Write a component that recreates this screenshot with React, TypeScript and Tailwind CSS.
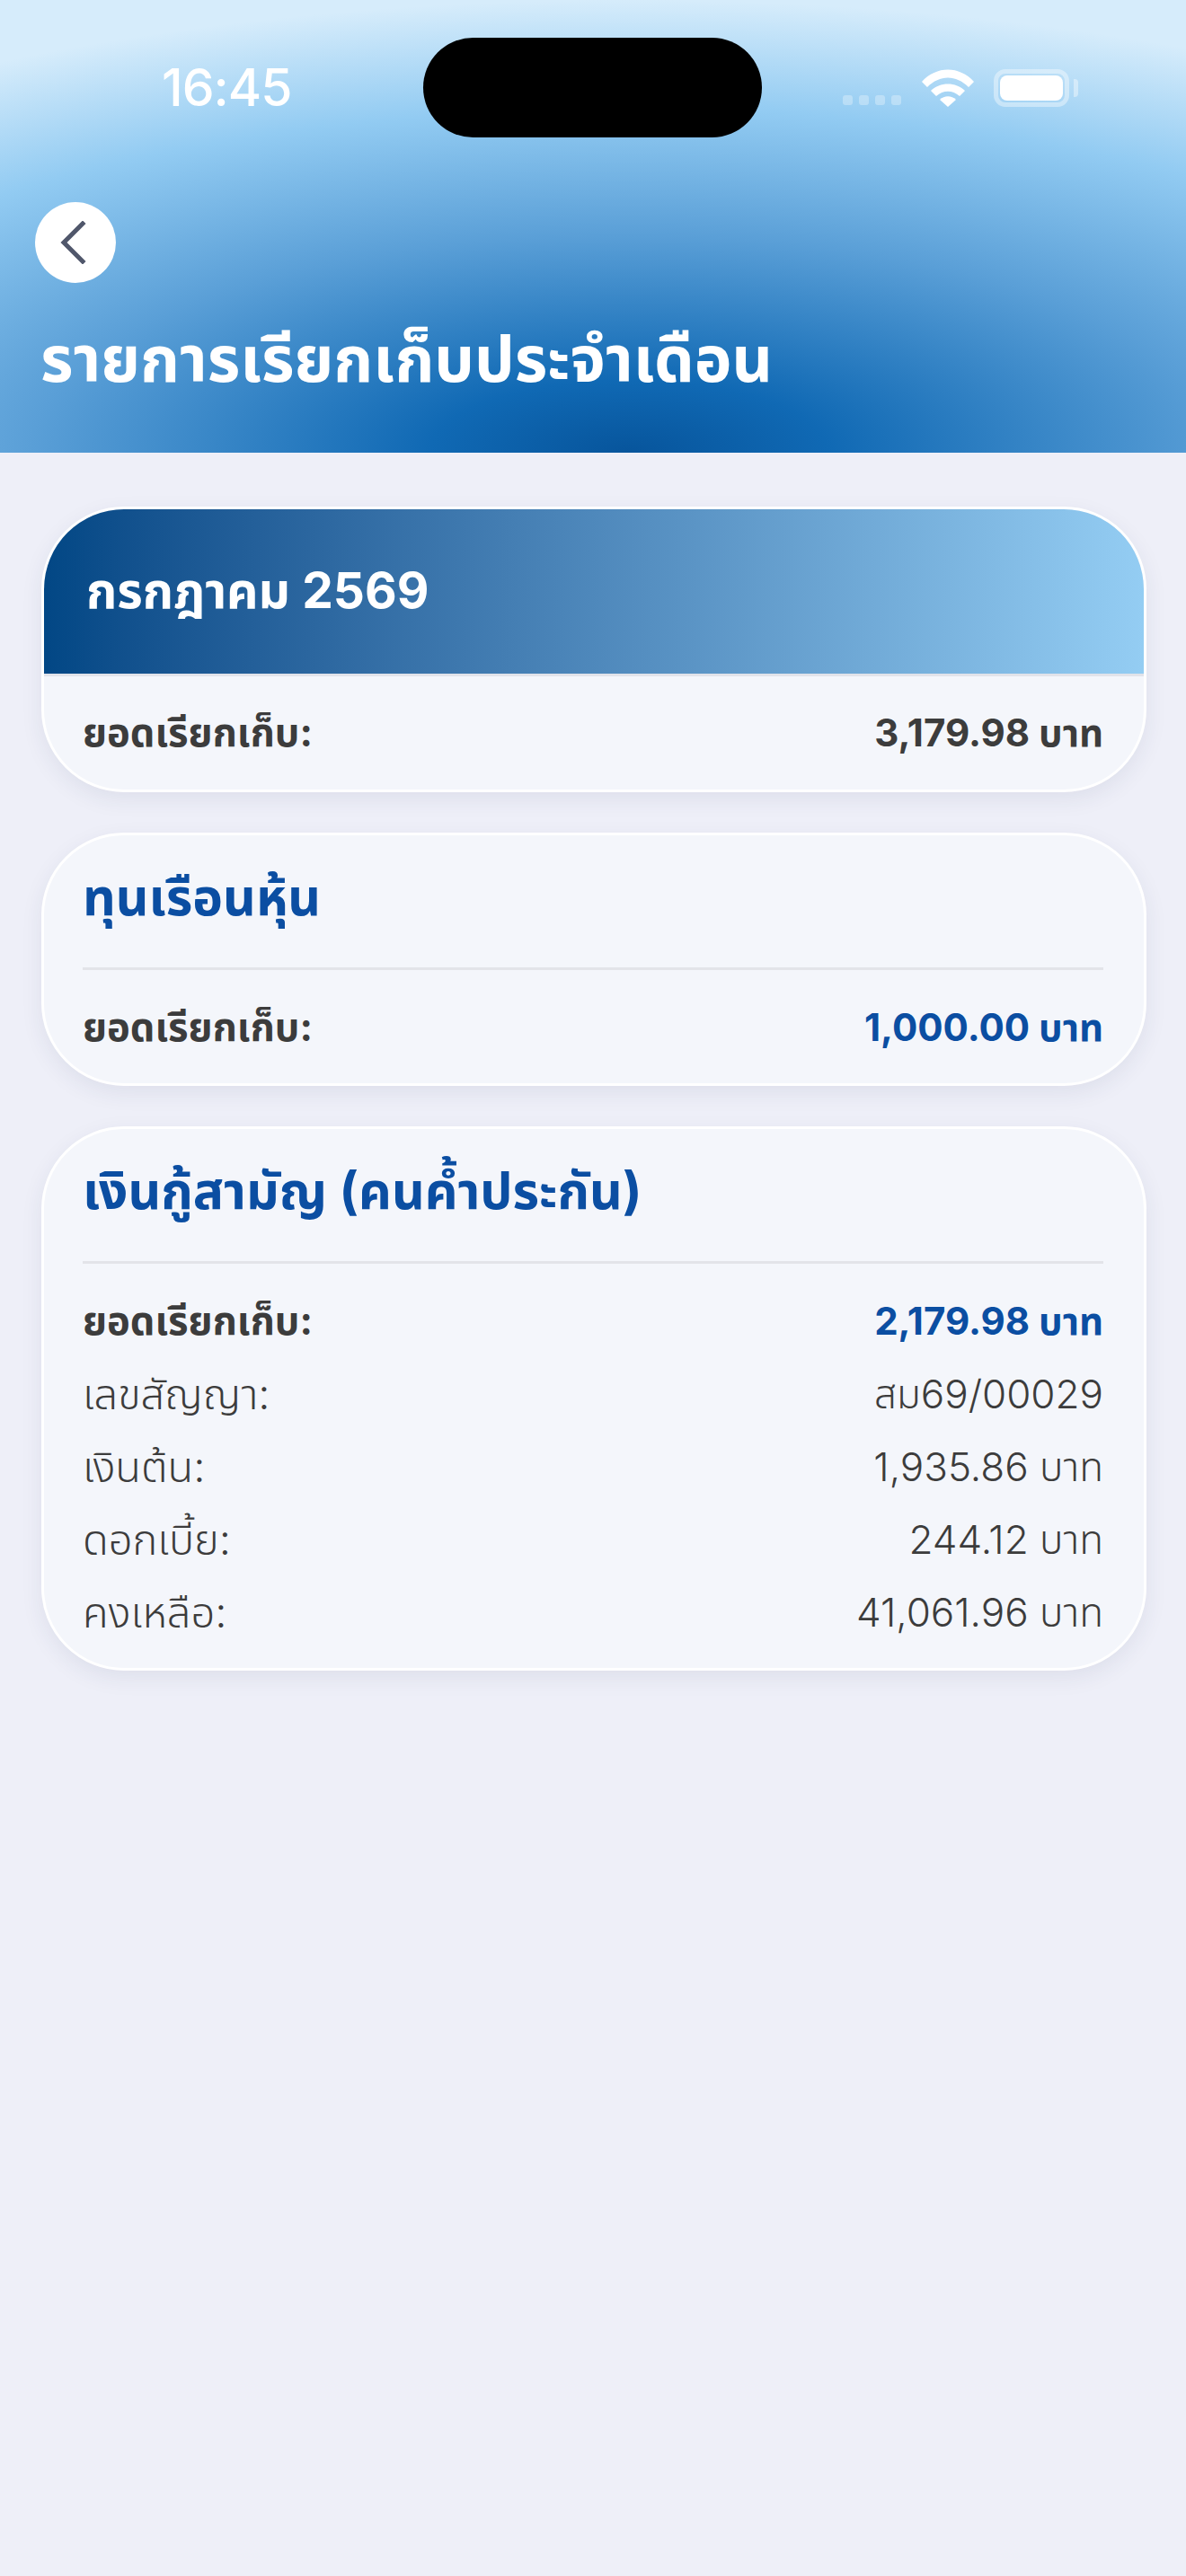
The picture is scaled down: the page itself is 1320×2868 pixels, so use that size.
import React from "react";

const font = "font-['Inter','Noto_Sans','Noto_Sans_Thai','Noto_Sans_CJK_SC',sans-serif]";

function StatusIcons() {
  return (
    <div className="flex items-center">
      <div className="flex gap-[7px] mt-[27px] mr-[23px]">
        <div className="w-[11px] h-[11px] rounded-[3px] bg-white/30" />
        <div className="w-[11px] h-[11px] rounded-[3px] bg-white/30" />
        <div className="w-[11px] h-[11px] rounded-[3px] bg-white/30" />
        <div className="w-[11px] h-[11px] rounded-[3px] bg-white/30" />
      </div>
      <svg width="58" height="42" viewBox="0 0 58 42" className="mr-[22px]">
        <path d="M0 14 C16 -4 42 -4 58 14 L52 20 C38 6 20 6 6 20 Z" fill="#fff" />
        <path d="M10 24 C20 14 38 14 48 24 L42 30 C34 23 24 23 16 30 Z" fill="#fff" />
        <path d="M20 34 C25 29 33 29 38 34 L29 42 Z" fill="#fff" />
      </svg>
      <div className="w-[84px] h-[42px] rounded-[13px] border-[5px] border-white/40 p-[2px]">
        <div className="w-full h-full rounded-[8px] bg-white" />
      </div>
      <div className="w-[5px] h-[20px] rounded-r-[4px] bg-white/40 ml-[5px]" />
    </div>
  );
}

function Row({ label, value, strong, blue }: { label: string; value: string; strong?: boolean; blue?: boolean }) {
  return (
    <div className="flex justify-between items-center h-[81px] leading-none text-[#3c3c3c]">
      <span className={strong ? "text-[43.5px] font-bold" : "text-[47px] font-light"}>{label}</span>
      <span className={`${strong ? "text-[42px] font-bold" : "text-[44px] font-light"} ${blue ? "text-[#0b4ea2]" : ""}`}>{value}</span>
    </div>
  );
}

export default function App() {
  return (
    <div className={`${font} w-[1320px] h-[2868px] bg-[#eeeff8] overflow-hidden`}>
      <header className="h-[504px] bg-[radial-gradient(ellipse_105%_100%_at_53%_100%,#07559c_0%,#1069b4_16%,#5a9fd7_48%,#92cbf2_76%,#d6ecfb_100%)]">
        <div className="flex justify-between items-center h-[111px] relative top-[42px] pl-[180px] pr-[120px]">
          <span className="text-[57px] font-medium text-white leading-none w-[291px] tracking-[-1px]">16:45</span>
          <div className="w-[377px] h-[111px] rounded-[56px] bg-black" />
          <div className="ml-auto"><StatusIcons /></div>
        </div>
        <div className="pl-[39px] pt-[114px]">
          <button className="w-[90px] h-[90px] rounded-full bg-white flex items-center justify-center">
            <svg width="30" height="48" viewBox="0 0 30 48" fill="none" stroke="#50576b" strokeWidth="5" className="mr-[4px]">
              <path d="M25 3 L4 24 L25 45" strokeLinecap="square" />
            </svg>
          </button>
          <h1 className="text-[70.5px] font-bold leading-none text-white ml-[6px] mt-[50px]">รายการเรียกเก็บประจำเดือน</h1>
        </div>
      </header>

      <main className="pl-[46px] pr-[44px] pt-[60px] flex flex-col gap-[45px]">
        <section className="rounded-[92px] border-[3px] border-white bg-[#f4f6fb] shadow-[0_8px_24px_rgba(40,50,90,0.08)] overflow-hidden">
          <div className="h-[180px] flex items-center pl-[47px] pb-[3px] bg-gradient-to-r from-[#024785] to-[#94cdf3] text-[55px] font-bold text-white border-b-[3px] border-[#e1e3ea] box-content">
            กรกฎาคม 2569
          </div>
          <div className="pl-[43px] pr-[45px] h-[126px] flex flex-col justify-center">
            <Row label="ยอดเรียกเก็บ:" value="3,179.98 บาท" strong />
          </div>
        </section>

        <section className="rounded-[92px] border-[3px] border-white bg-[#f4f6fb] shadow-[0_8px_24px_rgba(40,50,90,0.08)] pl-[43px] pr-[45px]">
          <h2 className="h-[137px] pb-[10px] flex items-center text-[57px] font-bold text-[#0b4ea2] border-b-[3px] border-[#e3e4e9] box-content">ทุนเรือนหุ้น</h2>
          <div className="pt-[23px] pb-[22px]">
            <Row label="ยอดเรียกเก็บ:" value="1,000.00 บาท" strong blue />
          </div>
        </section>

        <section className="rounded-[92px] border-[3px] border-white bg-[#f4f6fb] shadow-[0_8px_24px_rgba(40,50,90,0.08)] pl-[43px] pr-[45px]">
          <h2 className="h-[137px] pb-[10px] flex items-center text-[57px] font-bold text-[#0b4ea2] border-b-[3px] border-[#e3e4e9] box-content">เงินกู้สามัญ (คนค้ำประกัน)</h2>
          <div className="pt-[23px] pb-[22px]">
            <Row label="ยอดเรียกเก็บ:" value="2,179.98 บาท" strong blue />
            <Row label="เลขสัญญา:" value="สม69/00029" />
            <Row label="เงินต้น:" value="1,935.86 บาท" />
            <Row label="ดอกเบี้ย:" value="244.12 บาท" />
            <Row label="คงเหลือ:" value="41,061.96 บาท" />
          </div>
        </section>
      </main>
    </div>
  );
}
